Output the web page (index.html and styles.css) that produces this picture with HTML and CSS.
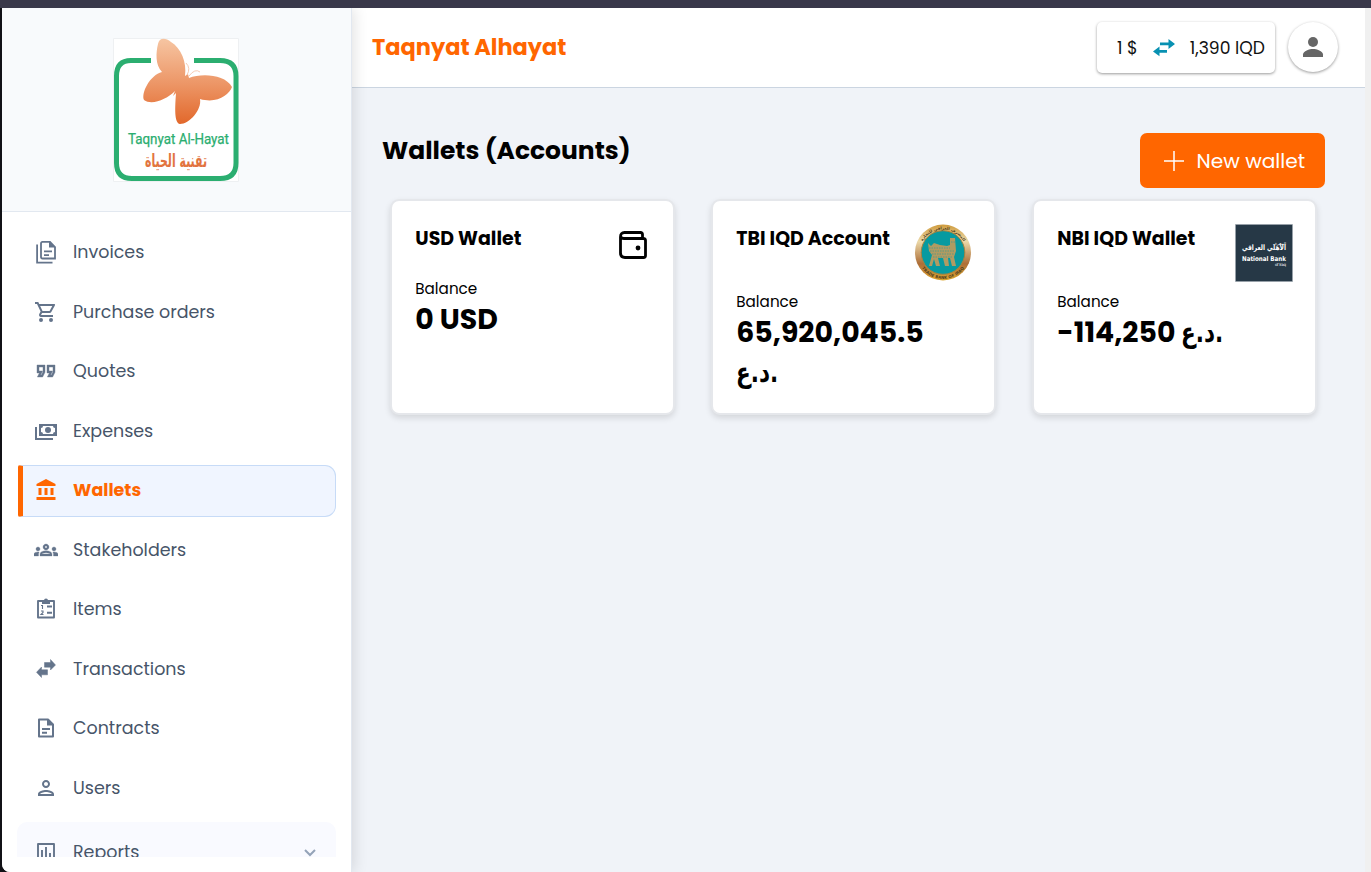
FILE: index.html
```html
<!DOCTYPE html>
<html lang="en">
<head>
<meta charset="utf-8">
<title>Wallets</title>
<link rel="stylesheet" href="styles.css">
</head>
<body>
<div class="frame-top"></div>
<div class="app">
  <aside class="sidebar">
    <div class="brand">
      <svg class="logo" viewBox="0 0 126 144" width="126" height="144">
        <defs><linearGradient id="wing" x1="0" y1="0" x2="0" y2="1"><stop offset="0" stop-color="#f6c5a2"/><stop offset=".55" stop-color="#ec9464"/><stop offset="1" stop-color="#e2682b"/></linearGradient></defs>
        <path fill="#fff" stroke="#eef0f2" d="M.5.5h125v143H.5z"/>
        <path d="M38 22.500H18Q3.500 22.500 3.500 38V125Q3.500 140.500 19 140.500H107Q123 140.500 123 125V38Q123 22.500 107 22.500H81" fill="none" stroke="#2bae70" stroke-width="5"/>
        <path fill="url(#wing)" d="M45 6C46 0 52-1 58 4C68 10 74 24 72 38L75 36L76 40C88 35 112 36 119 49C116 57 104 66 87 61C89 72 76 86 67 86C61 85 62 69 63 55L60 58L62 53C54 61 39 68 31 62C28 55 37 37 49 34C42 27 43 14 45 6Z"/>
        <path d="M74 37Q78 30 73 25M76 38Q82 30 87 34" fill="none" stroke="#f4c5aa" stroke-width=".9"/>
        <text class="logo-en" x="15" y="106" textLength="101" lengthAdjust="spacingAndGlyphs">Taqnyat Al-Hayat</text>
        <text class="logo-ar" x="63" y="129" text-anchor="middle" textLength="62" lengthAdjust="spacingAndGlyphs">تقنية الحياة</text>
      </svg>
    </div>
    <nav class="nav">
      <a class="item"><svg class="ico" viewBox="0 0 24 24"><path fill="none" stroke="currentColor" stroke-width="1.8" d="M8.500 1.900H16L21 7V18.500H8.500Q7 18.500 7 17V3.400Q7 1.900 8.500 1.900zM3.100 4.500V22.600H18.500M10 11.300H18M10 15.100H15"/><path d="M15 1.500v6h6.500z"/></svg><span>Invoices</span></a>
      <a class="item"><svg class="ico" viewBox="0 0 24 24"><path d="M15.550 13c.75 0 1.410-.41 1.750-1.030l3.580-6.490A.996.996 0 0020.010 4H5.210l-.94-2H1v2h2l3.600 7.590-1.350 2.440C4.520 15.370 5.480 17 7 17h12v-2H7l1.100-2h7.450zM6.160 6h12.150l-2.760 5H8.530L6.160 6zM7 18a2 2 0 100 4 2 2 0 000-4zm10 0a2 2 0 100 4 2 2 0 000-4z"/></svg><span>Purchase orders</span></a>
      <a class="item"><svg class="ico" viewBox="0 0 24 24"><path stroke="currentColor" stroke-width=".4" d="M18.620 18h-5.240l2-4H13V6h8v7.240L18.620 18zm-2-2h.76L19 12.760V8h-4v4h3.620l-2 4zm-8 2H3.380l2-4H3V6h8v7.240L8.620 18zm-2-2h.76L9 12.760V8H5v4h3.620l-2 4z"/></svg><span>Quotes</span></a>
      <a class="item"><svg class="ico" viewBox="0 0 24 24"><path d="M1 8h2v11h16v2H1z"/><path fill-rule="evenodd" d="M5 5h18v12H5zM9 7a2 2 0 01-2 2v4a2 2 0 012 2h10a2 2 0 012-2V9a2 2 0 01-2-2z"/><circle cx="14" cy="11" r="3"/></svg><span>Expenses</span></a>
      <a class="item active"><svg class="ico" viewBox="0 0 24 24"><path d="M12 1l9.500 5v2h-19V6zM4.500 10h3v7h-3zM10.500 10h3v7h-3zM16.500 10h3v7h-3zM2.500 19h19v3h-19z"/></svg><span>Wallets</span></a>
      <a class="item"><svg class="ico" viewBox="0 0 24 24"><path d="M4 13c1.100 0 2-.9 2-2s-.9-2-2-2-2 .9-2 2 .9 2 2 2zm1.130 1.100c-.37-.06-.74-.1-1.130-.1-.99 0-1.930.21-2.780.58C.48 14.900 0 15.620 0 16.430V18h4.500v-1.610c0-.83.23-1.610.63-2.290zM20 13c1.100 0 2-.9 2-2s-.9-2-2-2-2 .9-2 2 .9 2 2 2zm4 3.430c0-.81-.48-1.530-1.220-1.850-.85-.37-1.790-.58-2.780-.58-.39 0-.76.04-1.130.1.4.68.63 1.460.63 2.290V18H24v-1.570zm-7.760-2.780c-1.170-.52-2.610-.9-4.240-.9s-3.070.39-4.240.9C6.680 14.130 6 15.210 6 16.390V18h12v-1.610c0-1.180-.68-2.260-1.760-2.740zM8.070 16c.09-.23.13-.39.91-.69.97-.38 1.990-.56 3.020-.56s2.050.18 3.020.56c.77.3.81.46.91.69H8.070zM12 8c.55 0 1 .45 1 1s-.45 1-1 1-1-.45-1-1 .45-1 1-1m0-2c-1.660 0-3 1.340-3 3s1.340 3 3 3 3-1.340 3-3-1.340-3-3-3z" stroke="currentColor" stroke-width=".3"/></svg><span>Stakeholders</span></a>
      <a class="item"><svg class="ico" viewBox="0 0 24 24"><path fill="none" stroke="currentColor" stroke-width="1.900" stroke-linejoin="round" d="M4 4H20V20.500H4zM13 9.500H18M13 15.800H18"/><path d="M8 3.500h2a2 2 0 014 0h2V7H8z"/><path fill="none" stroke="currentColor" stroke-width="1.100" d="M7 8.500h1.500v3.500M7 14h2v1.500L7 17.500h2.500"/></svg><span>Items</span></a>
      <a class="item"><svg class="ico" viewBox="0 0 24 24"><path d="M10.500 5.500h6v-3L21.500 8l-5 5v-2.800h-6zM13.500 12.800v5H7.500V20.500l-5-5.200 5-5.300v2.800z" stroke="currentColor" stroke-width=".5"/></svg><span>Transactions</span></a>
      <a class="item"><svg class="ico" viewBox="0 0 24 24"><path fill="none" stroke="currentColor" stroke-width="2" stroke-linejoin="round" d="M5 3.500H14L19 8.500V20.500H5zM8 13H16M8 16.800H13"/><path d="M13 3v6.500h6.500z"/></svg><span>Contracts</span></a>
      <a class="item"><svg class="ico" viewBox="0 0 24 24"><path d="M12 6c1.100 0 2 .9 2 2s-.9 2-2 2-2-.9-2-2 .9-2 2-2m0 10c2.700 0 5.800 1.290 6 2H6c.23-.72 3.310-2 6-2m0-12C9.790 4 8 5.790 8 8s1.790 4 4 4 4-1.790 4-4-1.790-4-4-4zm0 10c-2.670 0-8 1.340-8 4v2h16v-2c0-2.660-5.330-4-8-4z"/></svg><span>Users</span></a>
      <a class="item group"><svg class="ico" viewBox="0 0 24 24"><path fill="none" stroke="currentColor" stroke-width="1.900" stroke-linejoin="round" d="M4 4H20V20H4zM8 10V18M12 7V18M16 13V18"/></svg><span>Reports</span><svg class="chev" viewBox="0 0 12 8"><path d="M1 1l5 5 5-5"/></svg></a>
    </nav>
  </aside>
  <main class="main">
    <header class="topbar">
      <div class="company">Taqnyat Alhayat</div>
      <div class="rate"><span>1 $</span><svg class="swap" viewBox="0 0 24 18"><path d="M8 3.500h8.500V0L23 5l-6.500 5V6.300H8zM15 11v2.800H7.500V17.300L1 12.400l6.500-5V11z"/></svg><span class="iqd">1,390 IQD</span></div>
      <div class="avatar"><svg viewBox="0 0 24 24"><circle cx="12" cy="7" r="5"/><path d="M2 22v-2.500C2 16 8.500 14 12 14s10 2 10 5.500V22z"/></svg></div>
    </header>
    <div class="heading">
      <h1>Wallets (Accounts)</h1>
      <button class="new"><svg viewBox="0 0 22 22"><path d="M11 1v20M1 11h20"/></svg><span>New wallet</span></button>
    </div>
    <section class="cards">
      <article class="card">
        <div class="card-head small"><h2>USD Wallet</h2><svg class="purse" viewBox="0 0 28 28"><path fill="none" stroke="#000" stroke-width="2.800" stroke-linejoin="round" d="M23.500 7.500V3.500Q23.500 1.500 21.500 1.500H5.500Q1.500 1.500 1.500 6V22Q1.500 26.500 6 26.500H24.500Q26.500 26.500 26.500 24.500V9.500Q26.500 7.500 24.500 7.500H5Q2 7.500 1.500 5"/><circle cx="19" cy="17" r="2.400"/></svg></div>
        <div class="label">Balance</div>
        <div class="amount">0 USD</div>
      </article>
      <article class="card">
        <div class="card-head"><h2>TBI IQD Account</h2><svg class="seal" viewBox="0 0 58 58">
          <defs><linearGradient id="gold" x1="0" y1="0" x2="0" y2="1"><stop offset="0" stop-color="#cf9b3d"/><stop offset=".3" stop-color="#ecd9a9"/><stop offset=".7" stop-color="#ad6e38"/><stop offset="1" stop-color="#dda52e"/></linearGradient><path id="arcTop" d="M5.500 29A23.500 23.500 0 0152.500 29"/><path id="arcBottom" d="M3 29A26 26 0 0055 29"/></defs>
          <circle cx="29" cy="28.500" r="28" fill="url(#gold)"/><circle cx="29" cy="28.500" r="21.800" fill="#079aa0" stroke="#a5833f"/>
          <path fill="#b19b62" d="M14 19L17 22 20 19 26 21 33 22 36 21V14L41 14 42 27 40 33 42 42H38L36 34 34 34 35 42H31L29 34 24 34 26 42H22L20 35 18 42H15L18 31 15 27Z"/>
          <path d="M15 24H36M16 27H40M18 30H40M37 18H41M19 33H38" stroke="#3c9990" stroke-width=".7" stroke-dasharray="1.500 1"/>
          <text class="seal-text"><textPath href="#arcTop" startOffset="50%" text-anchor="middle">المصرف العراقي للتجارة</textPath></text>
          <text class="seal-text"><textPath href="#arcBottom" startOffset="50%" text-anchor="middle">TRADE BANK OF IRAQ</textPath></text>
        </svg></div>
        <div class="label">Balance</div>
        <div class="amount">65,920,045.5<br><bdi class="ar own-line" dir="ltr">د.ع.</bdi></div>
      </article>
      <article class="card">
        <div class="card-head"><h2>NBI IQD Wallet</h2><svg class="seal" viewBox="0 0 58 58">
          <path fill="#263846" stroke="#9aa5ad" stroke-width=".6" d="M.5.5h57v57H.5z"/>
          <g class="nbi"><text x="38" y="20.500" font-size="4" textLength="13" lengthAdjust="spacingAndGlyphs">المصرف</text><text x="7" y="26" font-size="7.500" font-weight="700" textLength="44" lengthAdjust="spacingAndGlyphs">الأهلي العراقي</text><text x="7" y="36.500" font-size="6.500" font-weight="700" textLength="44" lengthAdjust="spacingAndGlyphs">National Bank</text><text x="40" y="41.500" font-size="4" textLength="11">of Iraq</text></g>
        </svg></div>
        <div class="label">Balance</div>
        <div class="amount">-114,250 <bdi class="ar" dir="ltr">د.ع.</bdi></div>
      </article>
    </section>
  </main>
</div>
</body>
</html>
```
FILE: styles.css
```css
* { box-sizing: border-box; }
body { margin: 0; height: 872px; overflow: hidden; background: #111116; font-family: Poppins, Inter, sans-serif; color: #000; }
h1, h2 { margin: 0; }
.frame-top { height: 8px; background: #39384a; }
.app { display: flex; height: 864px; margin-left: 2px; background: #f0f0f0; border-bottom-left-radius: 8px; overflow: hidden; }
.sidebar { width: 350px; background: #fff; border-right: 1px solid #e2e8f0; box-shadow: 2px 0 14px rgba(0,0,0,.12); z-index: 1; }
.brand { height: 204px; padding: 30px 0 0 111px; background: #f8fafc; border-bottom: 1px solid #e2e8f0; }
.logo { display: block; overflow: visible; }
.logo-en { font: 14px Roboto, sans-serif; fill: #2bae70; stroke: #2bae70; stroke-width: .25; }
.logo-ar { font: 700 18px "DejaVu Sans", sans-serif; fill: #e2743e; }
.nav { height: 645px; padding: 14.500px 15px 0; overflow: hidden; }
.item { display: flex; align-items: center; height: 52px; margin-bottom: 7.500px; padding: 0 17px .6px; gap: 15px; font-size: 17.480px; color: #475569; }
.ico { width: 24px; height: 24px; fill: currentColor; color: #64748b; }
.active { margin-left: 1px; background: #f0f5ff; border: 1px solid #c7dbf7; border-left: 5px solid #f60; border-radius: 2px 11px 11px 2px; padding-left: 11px; color: #f60; font-weight: 700; }
.active .ico { color: #f60; }
.group { height: 62px; border-radius: 10px; background: #f9faff; }
.chev { width: 12px; height: 8px; margin: 1px 3px 0 auto; fill: none; stroke: #94a3b8; stroke-width: 2; }
.main { width: 1013px; background: #f0f3f8; }
.topbar { display: flex; align-items: center; height: 80px; padding: 0 27px 0 20px; background: #fff; border-bottom: 1px solid #cbd5e1; }
.company { padding-bottom: 2px; font-size: 22.480px; font-weight: 700; color: #f60; margin-right: auto; }
.rate { display: flex; align-items: center; height: 51px; width: 178px; padding: 0 10px 0 20px; border-radius: 5px; box-shadow: 0 1px 3px rgba(0,0,0,.4); font-size: 17.200px; color: #111; }
.swap { width: 24px; height: 18px; margin-left: 14px; fill: #0891b2; }
.iqd { margin-left: auto; white-space: nowrap; }
.avatar { display: grid; place-items: center; width: 50px; height: 50px; margin: 0 0 1px 13px; border-radius: 50%; box-shadow: 0 1px 3px rgba(0,0,0,.4); }
.avatar svg { width: 24px; fill: #666; }
.heading { display: flex; justify-content: space-between; padding: 45px 40px 0 30px; }
h1 { font-size: 24.960px; line-height: 36px; }
.new { display: flex; align-items: center; gap: 12px; width: 185px; height: 55px; padding: 0 0 0 22.500px; border: 0; border-radius: 7px; background: #f60; color: #fff; font: 20.200px Poppins, Inter, sans-serif; white-space: nowrap; }
.new svg { width: 22px; height: 22px; stroke: #fff; stroke-width: 1.500; }
.cards { display: flex; gap: 36px; padding: 11px 38px 0; }
.card { width: 285px; height: 216px; padding: 23px 22px 20px 23.300px; border: 2px solid #e5e7eb; border-radius: 9px; background: #fff; box-shadow: 0 3px 6px rgba(0,0,0,.12); }
.card-head { display: flex; justify-content: space-between; height: 67px; }
.card-head.small { height: 54px; }
h2 { font-size: 18.950px; line-height: 30px; white-space: nowrap; }
.purse { width: 28px; height: 28px; margin: 7px 4.500px 0 0; }
.seal { width: 58px; height: 58px; flex: none; margin-right: .5px; }
.seal-text { font: 700 4px "DejaVu Sans", sans-serif; fill: #4f4121; }
.nbi { font-family: "DejaVu Sans", sans-serif; fill: #fff; }
.label { font-size: 15.200px; line-height: 22px; }
.amount { margin-top: -1px; font-size: 28.350px; font-weight: 700; line-height: 40px; white-space: nowrap; }
.ar { display: inline-block; line-height: 38px; font-family: "DejaVu Sans", sans-serif; transform: scaleX(.76); transform-origin: left; }
.own-line { line-height: 34px; }
```
